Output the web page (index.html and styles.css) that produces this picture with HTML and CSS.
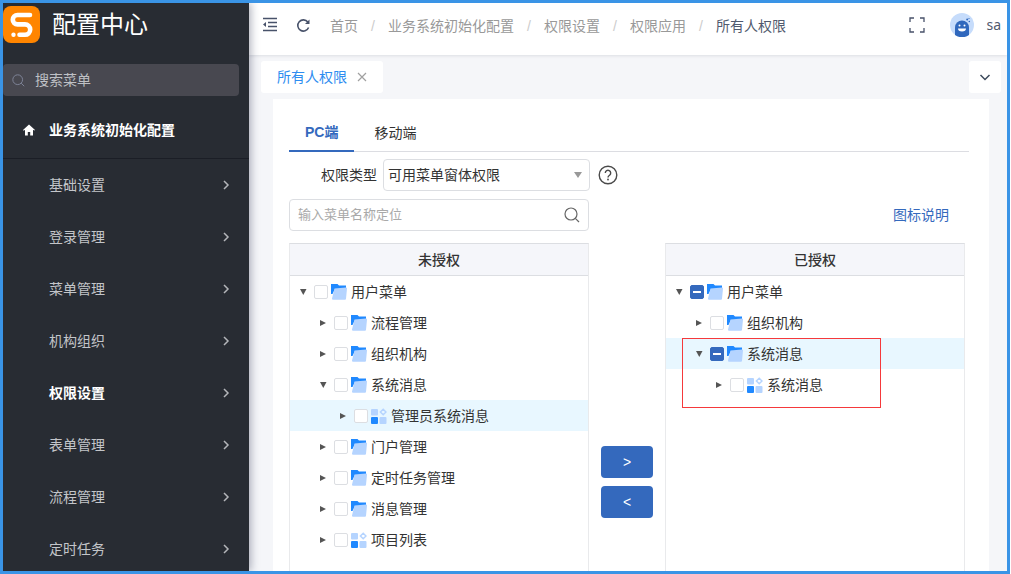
FILE: index.html
```html
<!DOCTYPE html>
<html lang="zh-CN">
<head>
<meta charset="utf-8">
<title>配置中心</title>
<link rel="stylesheet" href="styles.css">
</head>
<body>
<svg class="sprite" aria-hidden="true">
  <symbol id="folder" viewBox="0 0 16 16">
    <path d="M0 0h6.500l1.500 1.500h7V5H4L1.500 10H0z" fill="#2089ff"/>
    <path d="M3.500 4.500L15 3.500a1 1 0 0 1 1 1.100L15 14.800a1 1 0 0 1-1 .9H2a1 1 0 0 1-1-1.100z" fill="#b5d4ff"/>
  </symbol>
  <symbol id="module" viewBox="0 0 16 16">
    <rect x="0" y="1" width="7" height="6.500" rx="1" fill="#b5d4ff"/>
    <rect x="0" y="9" width="7" height="7" rx="1" fill="#2089ff"/>
    <rect x="8.500" y="9" width="7" height="7" rx="1" fill="#b5d4ff"/>
    <path d="M12.200 1.200l2.800 2.800-2.800 2.800L9.400 4z" fill="none" stroke="#b5d4ff" stroke-width="1.500"/>
  </symbol>
  <symbol id="chevron" viewBox="0 0 10 10">
    <path d="M3 1l4 4-4 4" fill="none" stroke="currentColor" stroke-width="1.500"/>
  </symbol>
  <symbol id="search" viewBox="0 0 16 16">
    <circle cx="7" cy="7" r="6" fill="none" stroke="currentColor" stroke-width="1.200"/>
    <path d="M11.300 11.300l3.700 3.700" stroke="currentColor" stroke-width="1.200" fill="none"/>
  </symbol>
  <symbol id="open" viewBox="0 0 10 10"><path d="M2 2h6.500L5.300 8z" fill="#555"/></symbol>
  <symbol id="closed" viewBox="0 0 10 10"><path d="M2 2v6l6-3z" fill="#555"/></symbol>
</svg>
<div class="app">
  <aside class="sidebar">
    <div class="brand">
      <svg class="logo" viewBox="0 0 37 37">
        <rect width="37" height="37" rx="8" fill="#ff8500"/>
        <path d="M27 9H14.500a4.700 4.700 0 0 0 0 9.400H22a5.200 5.200 0 0 1 0 10.400h-5.500" fill="none" stroke="#fff" stroke-width="4.600" stroke-linecap="round"/>
        <circle cx="10.500" cy="28.800" r="2.200" fill="#fff"/>
      </svg>
      <span>配置中心</span>
    </div>
    <label class="menu-search">
      <svg class="search-small"><use href="#search"/></svg>
      <input type="text" placeholder="搜索菜单" aria-label="搜索菜单">
    </label>
    <a class="home" href="#">
      <svg viewBox="0 0 12 12"><path d="M6 .5L0 6l.8.800L2 5.800V11.500h2.800V8h2.400v3.500H10V5.800l1.200.8L12 6z" fill="#fff"/></svg>
      <span>业务系统初始化配置</span>
    </a>
    <nav class="menu">
      <a href="#">基础设置<svg><use href="#chevron"/></svg></a>
      <a href="#">登录管理<svg><use href="#chevron"/></svg></a>
      <a href="#">菜单管理<svg><use href="#chevron"/></svg></a>
      <a href="#">机构组织<svg><use href="#chevron"/></svg></a>
      <a href="#" class="active">权限设置<svg><use href="#chevron"/></svg></a>
      <a href="#">表单管理<svg><use href="#chevron"/></svg></a>
      <a href="#">流程管理<svg><use href="#chevron"/></svg></a>
      <a href="#">定时任务<svg><use href="#chevron"/></svg></a>
    </nav>
  </aside>
  <div class="main">
    <header class="topbar">
      <button class="icon-btn" aria-label="折叠菜单">
        <svg viewBox="0 0 16 16" fill="none" stroke="#48526a" stroke-width="1.300"><path d="M1 1.500h14M6 5.500h9M6 9.500h9M1 13.500h14"/><path d="M4 5L1 7.500 4 10z" fill="#48526a" stroke="none"/></svg>
      </button>
      <button class="icon-btn" aria-label="刷新">
        <svg viewBox="0 0 16 16" fill="none" stroke="#48526a" stroke-width="1.600"><path d="M12.800 5A5.600 5.600 0 1 0 13.600 10.500"/><path d="M14.500 2.500v4.500H10z" fill="#48526a" stroke="none"/></svg>
      </button>
      <nav class="crumbs">
        <a href="#">首页</a><i>/</i><a href="#">业务系统初始化配置</a><i>/</i><a href="#">权限设置</a><i>/</i><a href="#">权限应用</a><i>/</i><span>所有人权限</span>
      </nav>
      <button class="icon-btn full" aria-label="全屏">
        <svg viewBox="0 0 16 16" fill="none" stroke="#48526a" stroke-width="1.300"><path d="M1 5V1h4M11 1h4v4M15 11v4h-4M5 15H1v-4"/></svg>
      </button>
      <div class="user">
        <svg class="avatar" viewBox="0 0 24 24">
          <circle cx="12" cy="12" r="12" fill="#c6dcfb"/>
          <path d="M5 22V14.500a7 7 0 0 1 14 0V22a12 12 0 0 1-14 0z" fill="#3068bd"/>
          <circle cx="9.500" cy="12.500" r="1" fill="#fff"/><circle cx="14.500" cy="12.500" r="1" fill="#fff"/>
          <path d="M8 15.500h8a4 3 0 0 1-8 0z" fill="#fff"/>
          <circle cx="17.200" cy="6.500" r="1" fill="#3068bd"/><circle cx="19.300" cy="8.500" r=".8" fill="#3068bd"/><circle cx="19" cy="5.500" r=".6" fill="#3068bd"/>
        </svg>
        <span>sa</span>
      </div>
    </header>
    <div class="tabbar">
      <div class="page-tab">
        <a href="#">所有人权限</a>
        <button aria-label="关闭"><svg viewBox="0 0 10 10"><path d="M1 1l8 8M9 1L1 9" stroke="#a0a0a0" stroke-width="1.200" fill="none"/></svg></button>
      </div>
      <button class="more" aria-label="更多"><svg viewBox="0 0 12 12"><path d="M1.500 4L6 8.500 10.500 4" stroke="#3c4a5c" stroke-width="1.500" fill="none"/></svg></button>
    </div>
    <main class="card">
      <div class="tabs" role="tablist">
        <button role="tab" class="on" aria-selected="true">PC端</button>
        <button role="tab" aria-selected="false">移动端</button>
      </div>
      <div class="field">
        <label for="type">权限类型</label>
        <div class="select">
          <select id="type"><option>可用菜单窗体权限</option></select>
          <svg viewBox="0 0 8 6"><path d="M0 0h8L4 6z" fill="#999"/></svg>
        </div>
        <svg class="help" viewBox="0 0 20 20" fill="none" stroke="#4a4a4a"><circle cx="10" cy="10" r="8.800" stroke-width="1.400"/><path d="M7.300 8a2.700 2.700 0 1 1 4.300 2.200c-1 .7-1.600 1.100-1.600 2.300" stroke-width="1.400"/><circle cx="10" cy="14.500" r=".9" fill="#4a4a4a" stroke="none"/></svg>
      </div>
      <div class="find-row">
        <label class="find">
          <input type="text" placeholder="输入菜单名称定位" aria-label="输入菜单名称定位">
          <svg class="search-large"><use href="#search"/></svg>
        </label>
        <a href="#">图标说明</a>
      </div>
      <div class="transfer">
        <section class="panel">
          <h2>未授权</h2>
          <ul class="tree">
            <li><svg class="arrow"><use href="#open"/></svg><label><input type="checkbox"><svg class="kind"><use href="#folder"/></svg>用户菜单</label></li>
            <li class="l2"><svg class="arrow"><use href="#closed"/></svg><label><input type="checkbox"><svg class="kind"><use href="#folder"/></svg>流程管理</label></li>
            <li class="l2"><svg class="arrow"><use href="#closed"/></svg><label><input type="checkbox"><svg class="kind"><use href="#folder"/></svg>组织机构</label></li>
            <li class="l2"><svg class="arrow"><use href="#open"/></svg><label><input type="checkbox"><svg class="kind"><use href="#folder"/></svg>系统消息</label></li>
            <li class="l3 picked"><svg class="arrow"><use href="#closed"/></svg><label><input type="checkbox"><svg class="kind"><use href="#module"/></svg>管理员系统消息</label></li>
            <li class="l2"><svg class="arrow"><use href="#closed"/></svg><label><input type="checkbox"><svg class="kind"><use href="#folder"/></svg>门户管理</label></li>
            <li class="l2"><svg class="arrow"><use href="#closed"/></svg><label><input type="checkbox"><svg class="kind"><use href="#folder"/></svg>定时任务管理</label></li>
            <li class="l2"><svg class="arrow"><use href="#closed"/></svg><label><input type="checkbox"><svg class="kind"><use href="#folder"/></svg>消息管理</label></li>
            <li class="l2"><svg class="arrow"><use href="#closed"/></svg><label><input type="checkbox"><svg class="kind"><use href="#module"/></svg>项目列表</label></li>
          </ul>
        </section>
        <div class="moves">
          <button>&gt;</button>
          <button>&lt;</button>
        </div>
        <section class="panel">
          <h2>已授权</h2>
          <ul class="tree">
            <li><svg class="arrow"><use href="#open"/></svg><label><input type="checkbox" class="partial"><svg class="kind"><use href="#folder"/></svg>用户菜单</label></li>
            <li class="l2"><svg class="arrow"><use href="#closed"/></svg><label><input type="checkbox"><svg class="kind"><use href="#folder"/></svg>组织机构</label></li>
            <li class="l2 picked"><svg class="arrow"><use href="#open"/></svg><label><input type="checkbox" class="partial"><svg class="kind"><use href="#folder"/></svg>系统消息</label><span class="marker"></span></li>
            <li class="l3"><svg class="arrow"><use href="#closed"/></svg><label><input type="checkbox"><svg class="kind"><use href="#module"/></svg>系统消息</label></li>
          </ul>
        </section>
      </div>
    </main>
  </div>
</div>
</body>
</html>
```
FILE: styles.css
```css
* { box-sizing: border-box; }
body {
  margin: 0;
  font: 14px/20px "Liberation Sans", "Noto Sans CJK SC", sans-serif;
  color: #333;
  background: #fff;
}
a { color: inherit; text-decoration: none; }
svg { display: block; flex: none; }
button, input, select { font: inherit; color: inherit; margin: 0; }
button { border: 0; padding: 0; background: none; }
.sprite { position: absolute; width: 0; height: 0; }

.app {
  display: flex;
  height: 100vh;
  margin-right: 1px;
  border: 3px solid #3a94e6;
  overflow: hidden;
}

.sidebar {
  position: relative;
  z-index: 2;
  flex: none;
  width: 246px;
  background: #282c33;
  color: #c3c5c9;
  box-shadow: 2px 0 8px rgba(29, 35, 65, .35);
}
.brand {
  display: flex;
  align-items: center;
  gap: 12px;
  height: 43px;
  color: #fff;
  font-size: 24px;
  line-height: 32px;
}
.logo { width: 37px; height: 37px; }
.menu-search {
  display: flex;
  align-items: center;
  gap: 10px;
  height: 32px;
  margin: 18px 10px 0 0;
  padding: 0 9px;
  background: #484850;
  border-radius: 4px;
}
.search-small { width: 13px; height: 13px; color: #7e8498; }
.menu-search input {
  flex: 1;
  min-width: 0;
  padding: 0;
  border: 0;
  background: none;
}
.menu-search input::placeholder { color: #bfc0c5; opacity: 1; }
.search-small, .search-large { overflow: hidden; }
.home {
  display: flex;
  align-items: center;
  gap: 14px;
  height: 63px;
  padding: 6px 20px 0;
  border-bottom: 1px solid #1b1e26;
  color: #fff;
  font-weight: bold;
}
.home svg { width: 12px; height: 12px; }
.menu a {
  display: flex;
  align-items: center;
  justify-content: space-between;
  height: 52px;
  padding: 0 18px 0 46px;
}
.menu svg { width: 10px; height: 10px; color: #b4b6ba; }
.menu .active { color: #fff; font-weight: bold; }

.main {
  display: flex;
  flex-direction: column;
  flex: 1;
  min-width: 0;
  background: #f5f6f9;
}
.topbar {
  display: flex;
  flex: none;
  align-items: center;
  gap: 17px;
  height: 52px;
  padding: 0 6px 8px 13px;
  background: #fff;
  box-shadow: 0 1px 3px rgba(0, 21, 41, .1);
}
.icon-btn svg { width: 16px; height: 16px; }
.crumbs { display: flex; flex: 1; padding: 2px 0 0 2px; color: #999; white-space: nowrap; }
.crumbs i { width: 30px; text-align: center; color: #ccc; font-style: normal; }
.crumbs span { color: #515a6e; }
.full { margin-right: 8px; }
.user {
  display: flex;
  align-items: center;
  gap: 12px;
  color: #515a6e;
  font-family: "Noto Sans", sans-serif;
}
.avatar { width: 24px; height: 24px; }

.tabbar {
  display: flex;
  flex: none;
  justify-content: space-between;
  padding: 6px 6px 6px 12px;
}
.page-tab {
  display: flex;
  align-items: center;
  gap: 10px;
  height: 32px;
  padding: 0 16px;
  background: #fff;
  border-radius: 3px;
  color: #2d8cf0;
}
.page-tab svg { width: 10px; height: 10px; }
.more { display: grid; place-items: center; width: 32px; background: #fff; border-radius: 3px; }
.more svg { width: 12px; height: 12px; }

.card {
  display: flex;
  flex-direction: column;
  flex: 1;
  min-height: 0;
  margin: 0 18px 0 24px;
  padding: 14px 20px 0 16px;
  background: #fff;
}
.tabs { display: flex; flex: none; gap: 4px; height: 39px; border-bottom: 1px solid #dcdde2; }
.tabs button { height: 39px; padding: 0 16px; }
.tabs .on { border-bottom: 2px solid #3469bd; color: #3469bd; font-weight: bold; }
.field { display: flex; flex: none; align-items: center; margin-top: 7px; padding-left: 32px; gap: 6px; }
.select { position: relative; width: 207px; }
.select select {
  display: block;
  width: 100%;
  height: 32px;
  padding: 0 24px 0 4px;
  border: 1px solid #dcdee2;
  border-radius: 4px;
  background: #fff;
  appearance: none;
}
.select svg { position: absolute; top: 13px; right: 8px; width: 8px; height: 6px; pointer-events: none; }
.help { width: 20px; height: 20px; margin-left: 2px; }
.find-row {
  display: flex;
  flex: none;
  align-items: center;
  justify-content: space-between;
  margin-top: 8px;
  padding-right: 20px;
  color: #3469bd;
}
.find {
  display: flex;
  align-items: center;
  width: 300px;
  height: 32px;
  padding: 0 8px;
  border: 1px solid #dcdee2;
  border-radius: 4px;
}
.find input { flex: 1; min-width: 0; padding: 0; border: 0; outline: 0; font-size: 13px; color: #333; }
.find input::placeholder { color: #a9a9a9; opacity: 1; }
.search-large { width: 16px; height: 16px; color: #666; }

.transfer { display: flex; flex: 1; min-height: 0; margin-top: 12px; }
.panel {
  flex: none;
  width: 300px;
  border: 1px solid #e9eaec;
  border-top-color: #dcdee2;
  border-bottom: 0;
}
.panel h2 {
  height: 32px;
  margin: 0;
  border-bottom: 1px solid #dcdee2;
  background: #f5f6fa;
  font-size: 14px;
  line-height: 32px;
  font-weight: 500;
  text-align: center;
}
.tree { margin: 0; padding: 0; list-style: none; }
.tree li { position: relative; display: flex; align-items: center; gap: 6px; height: 31px; padding-left: 8px; }
.tree .l2 { padding-left: 28px; }
.tree .l3 { padding-left: 48px; }
.tree .picked { background: #e8f7ff; }
.tree label { display: flex; align-items: center; }
.arrow { width: 10px; height: 10px; }
.kind { width: 16px; height: 16px; margin: 0 4px 0 3px; }
.tree input {
  width: 14px;
  height: 14px;
  border: 1px solid #dcdee2;
  border-radius: 2px;
  background: #fff;
  appearance: none;
}
.tree .partial {
  border-color: #3469bd;
  background: linear-gradient(#fff, #fff) center / 8px 2px no-repeat #3469bd;
}
.marker {
  position: absolute;
  top: 0;
  left: 16px;
  width: 199px;
  height: 70px;
  border: 1px solid #f5393b;
  pointer-events: none;
}
.moves {
  display: flex;
  flex: none;
  flex-direction: column;
  align-items: center;
  gap: 8px;
  width: 76px;
  padding-top: 203px;
}
.moves button { width: 52px; height: 32px; border-radius: 4px; background: #3469bd; color: #fff; }
```
